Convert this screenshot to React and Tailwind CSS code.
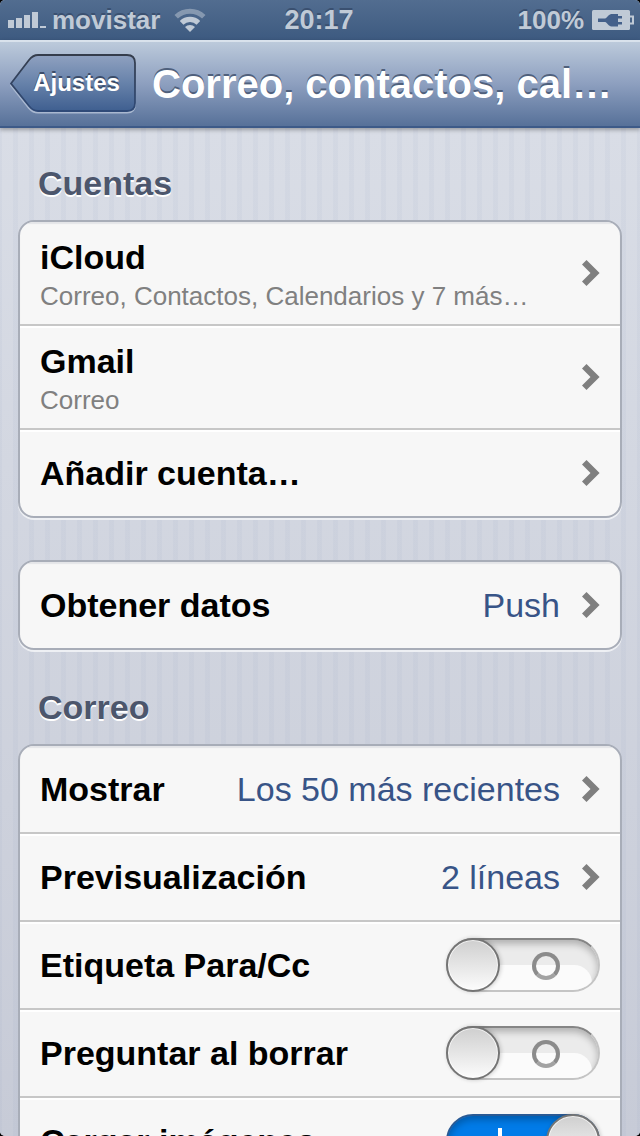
import React, { useState } from 'react';

const accounts = [
  { name: 'iCloud', detail: 'Correo, Contactos, Calendarios y 7 más…' },
  { name: 'Gmail', detail: 'Correo' },
  { name: 'Añadir cuenta…' },
];

const mailValues = [
  { name: 'Mostrar', value: 'Los 50 más recientes' },
  { name: 'Previsualización', value: '2 líneas' },
];

const mailSwitches = [
  { id: 'etiqueta', name: 'Etiqueta Para/Cc', on: false },
  { id: 'preguntar', name: 'Preguntar al borrar', on: false },
  { id: 'imagenes', name: 'Cargar imágenes', on: true },
];

function SignalIcon() {
  return (
    <svg className="h-4 w-[38px]" viewBox="0 0 38 16" fill="currentColor" aria-hidden="true">
      <rect x="0" y="8" width="6" height="8" />
      <rect x="8" y="6" width="6" height="10" />
      <rect x="16" y="3" width="6" height="13" />
      <rect x="24" y="0" width="6" height="16" />
      <rect x="32" y="14" width="6" height="2" />
    </svg>
  );
}

function WifiIcon() {
  return (
    <svg className="h-6 w-8" viewBox="0 0 32 24" fill="none" stroke="currentColor" aria-hidden="true">
      <path d="M2.2 8.8 A20 20 0 0 1 29.8 8.8" strokeWidth="5" opacity="0.5" />
      <path d="M7.6 14.8 A12 12 0 0 1 24.4 14.8" strokeWidth="5.2" />
      <path d="M11 19 A7 7 0 0 1 21 19 L16 24 Z" fill="currentColor" stroke="none" />
    </svg>
  );
}

function BatteryIcon() {
  return (
    <svg className="h-5 w-[42px]" viewBox="0 0 42 20" aria-hidden="true">
      <rect x="0" y="0" width="38" height="20" rx="1.5" fill="currentColor" />
      <path d="M38 6.5 H41 V13.5 H38" fill="none" stroke="currentColor" strokeWidth="2" />
      <path
        d="M6 8.5 H13 C15.5 8 16.5 4 19.5 4 H26 V6 H30 V8.5 H26 V12 H30 V14.5 H26 V16.5 H19.5 C16.5 16.5 15.5 12.5 13 12 H6 Z"
        fill="#44608a"
      />
    </svg>
  );
}

function Chevron() {
  return (
    <svg className="h-[26px] w-[18px] shrink-0" viewBox="0 0 18 26" fill="#7f7f7f" aria-hidden="true">
      <path d="M4.5 0 L17.6 13 L4.5 26 L0 21.5 L8.5 13 L0 4.5 Z" />
    </svg>
  );
}

function BackButton() {
  return (
    <button
      type="button"
      className="relative isolate h-[60px] w-[126px] shrink-0 pb-0.5 pl-[7px] text-center text-[24px] leading-[30px] font-bold text-white [text-shadow:0_-2px_0_#3c4d6a]"
    >
      <svg className="absolute inset-0 -z-10 h-full w-full" viewBox="0 0 126 60" fill="none" aria-hidden="true">
        <defs>
          <linearGradient id="back-fill" x1="0" y1="0" x2="0" y2="1">
            <stop offset="0" stopColor="#8fa1c0" />
            <stop offset="0.5" stopColor="#6782aa" />
            <stop offset="1" stopColor="#3f5f90" />
          </linearGradient>
          <linearGradient id="back-edge" x1="0" y1="0" x2="0" y2="1">
            <stop offset="0" stopColor="#353d4c" />
            <stop offset="1" stopColor="#2f4a78" />
          </linearGradient>
        </defs>
        <path
          d="M1 31.5 L19 7 Q23 2.5 28 2.5 H117 Q125 2.5 125 10.5 V50.5 Q125 58.5 117 58.5 H28 Q23 58.5 19 54 Z"
          stroke="#a9b8d0"
          strokeWidth="2"
        />
        <path
          d="M1 29.5 L19 6 Q23 1 28 1 H117 Q125 1 125 9 V49 Q125 57 117 57 H28 Q23 57 19 52 Z"
          fill="url(#back-fill)"
          stroke="url(#back-edge)"
          strokeWidth="1.8"
        />
      </svg>
      Ajustes
    </button>
  );
}

function Switch({ id, defaultOn }) {
  const [on, setOn] = useState(defaultOn);

  return (
    <span className="relative flex h-[54px] w-[154px] shrink-0">
      <input
        id={id}
        type="checkbox"
        checked={on}
        onChange={(e) => setOn(e.target.checked)}
        className="h-full w-full appearance-none rounded-full border-2 border-[#c4c4c4] border-t-[#858585] bg-[#ebebeb] shadow-[inset_0_4px_7px_rgba(0,0,0,0.25)] checked:border-[#2a5a94] checked:bg-[#017be8]"
      />
      {/* gloss on the lower half of the track */}
      <span className="pointer-events-none absolute inset-0.5 overflow-hidden rounded-full">
        <span
          className={`absolute right-1.5 bottom-0 left-0 h-[25px] rounded-tr-[18px] ${
            on ? 'bg-[#3f9cf5]' : 'bg-[#fbfbfb]'
          }`}
        />
      </span>
      {on ? (
        <span className="pointer-events-none absolute top-3.5 left-[52px] h-7 w-1 bg-white" />
      ) : (
        <span className="pointer-events-none absolute top-3.5 left-[86px] size-7 rounded-full border-4 border-[#8b8b8b] border-b-[#a2a2a2]" />
      )}
      <span
        className={`pointer-events-none absolute top-0 size-[54px] rounded-full border-2 border-[#757575] bg-linear-to-b from-[#cfcfcf] to-[#fcfcfc] shadow-[inset_0_0_0_1px_rgba(255,255,255,0.7),1px_0_4px_rgba(0,0,0,0.2)] ${
          on ? 'right-0' : 'left-0'
        }`}
      />
    </span>
  );
}

function Card({ children }) {
  return (
    <ul className="divide-y-2 divide-[#c7c7c7] overflow-hidden rounded-2xl border-2 border-[#a8adb8] bg-[#f7f7f7] shadow-[0_2px_0_#eef0f4]">
      {children}
    </ul>
  );
}

function LinkRow({ name, detail, value }) {
  return (
    <li className="shadow-[inset_0_2px_0_#ffffff] first:shadow-[inset_0_2px_1px_#e4e5e8]">
      <a
        href="#"
        className={`flex items-center gap-[22px] px-5 ${detail ? 'h-[102px] pt-1.5' : 'h-[86px]'}`}
      >
        <span className="min-w-0 flex-1">
          <span className="block truncate text-[34px] leading-10 font-bold">{name}</span>
          {detail && <span className="block truncate text-[26px] leading-[38px] text-[#808080]">{detail}</span>}
        </span>
        {value && <span className="text-[34px] leading-10 text-[#385487]">{value}</span>}
        <span className={detail ? 'pb-1.5' : ''}>
          <Chevron />
        </span>
      </a>
    </li>
  );
}

function SwitchRow({ id, name, on }) {
  return (
    <li className="shadow-[inset_0_2px_0_#ffffff]">
      <div className="flex h-[86px] items-center justify-between px-5">
        <label htmlFor={id} className="text-[34px] leading-10 font-bold">
          {name}
        </label>
        <Switch id={id} defaultOn={on} />
      </div>
    </li>
  );
}

function Heading({ children }) {
  return (
    <h2 className="px-5 pb-[18px] text-[34px] leading-[38px] font-bold text-[#4c566c] [text-shadow:0_2px_0_#ffffff]">
      {children}
    </h2>
  );
}

export default function App() {
  return (
    <div className="h-screen bg-black font-['Liberation_Sans',Arial,sans-serif]">
      <div className="flex h-full flex-col overflow-hidden rounded-[5px] bg-[#cfd3de]">
        <div className="grid h-10 shrink-0 grid-cols-[1fr_auto_1fr] items-center bg-linear-to-b from-[#526d90] to-[#3d5a80] pr-1.5 pl-2 text-[26px] leading-10 font-bold text-[#c0cad6] [text-shadow:0_-2px_0_#3a5070]">
          <div className="flex items-center gap-1.5">
            <SignalIcon />
            <span>movistar</span>
            <span className="pl-2">
              <WifiIcon />
            </span>
          </div>
          <span className="pr-1 text-[27px]">20:17</span>
          <div className="flex items-center justify-end gap-2">
            <span>100%</span>
            <BatteryIcon />
          </div>
        </div>

        <header className="z-10 flex h-[88px] shrink-0 items-center gap-4 border-t-2 border-b-2 border-t-[#d9e2ec] border-b-[#3d5a88] bg-linear-to-b from-[#bccadb] via-[#8d9fbf] to-[#577199] px-2.5 shadow-[0_2px_4px_rgba(0,0,0,0.3)]">
          <BackButton />
          <h1 className="min-w-0 flex-1 truncate text-[40px] leading-[60px] font-bold text-white [text-shadow:0_-2px_0_#4f607c]">
            Correo, contactos, cal…
          </h1>
        </header>

        <main className="min-h-0 flex-1 overflow-y-auto bg-[repeating-linear-gradient(90deg,rgba(120,140,180,0.06)_0_2px,transparent_2px_13px,rgba(120,140,180,0.06)_13px_16px),linear-gradient(#d9dde6,#c7cbd7)] px-[18px] pt-9 [scrollbar-width:none]">
          <Heading>Cuentas</Heading>
          <Card>
            {accounts.map((account) => (
              <LinkRow key={account.name} {...account} />
            ))}
          </Card>

          <div className="pt-[42px] pb-[38px]">
            <Card>
              <LinkRow name="Obtener datos" value="Push" />
            </Card>
          </div>

          <Heading>Correo</Heading>
          <Card>
            {mailValues.map((row) => (
              <LinkRow key={row.name} {...row} />
            ))}
            {mailSwitches.map((row) => (
              <SwitchRow key={row.id} {...row} />
            ))}
          </Card>
        </main>
      </div>
    </div>
  );
}
